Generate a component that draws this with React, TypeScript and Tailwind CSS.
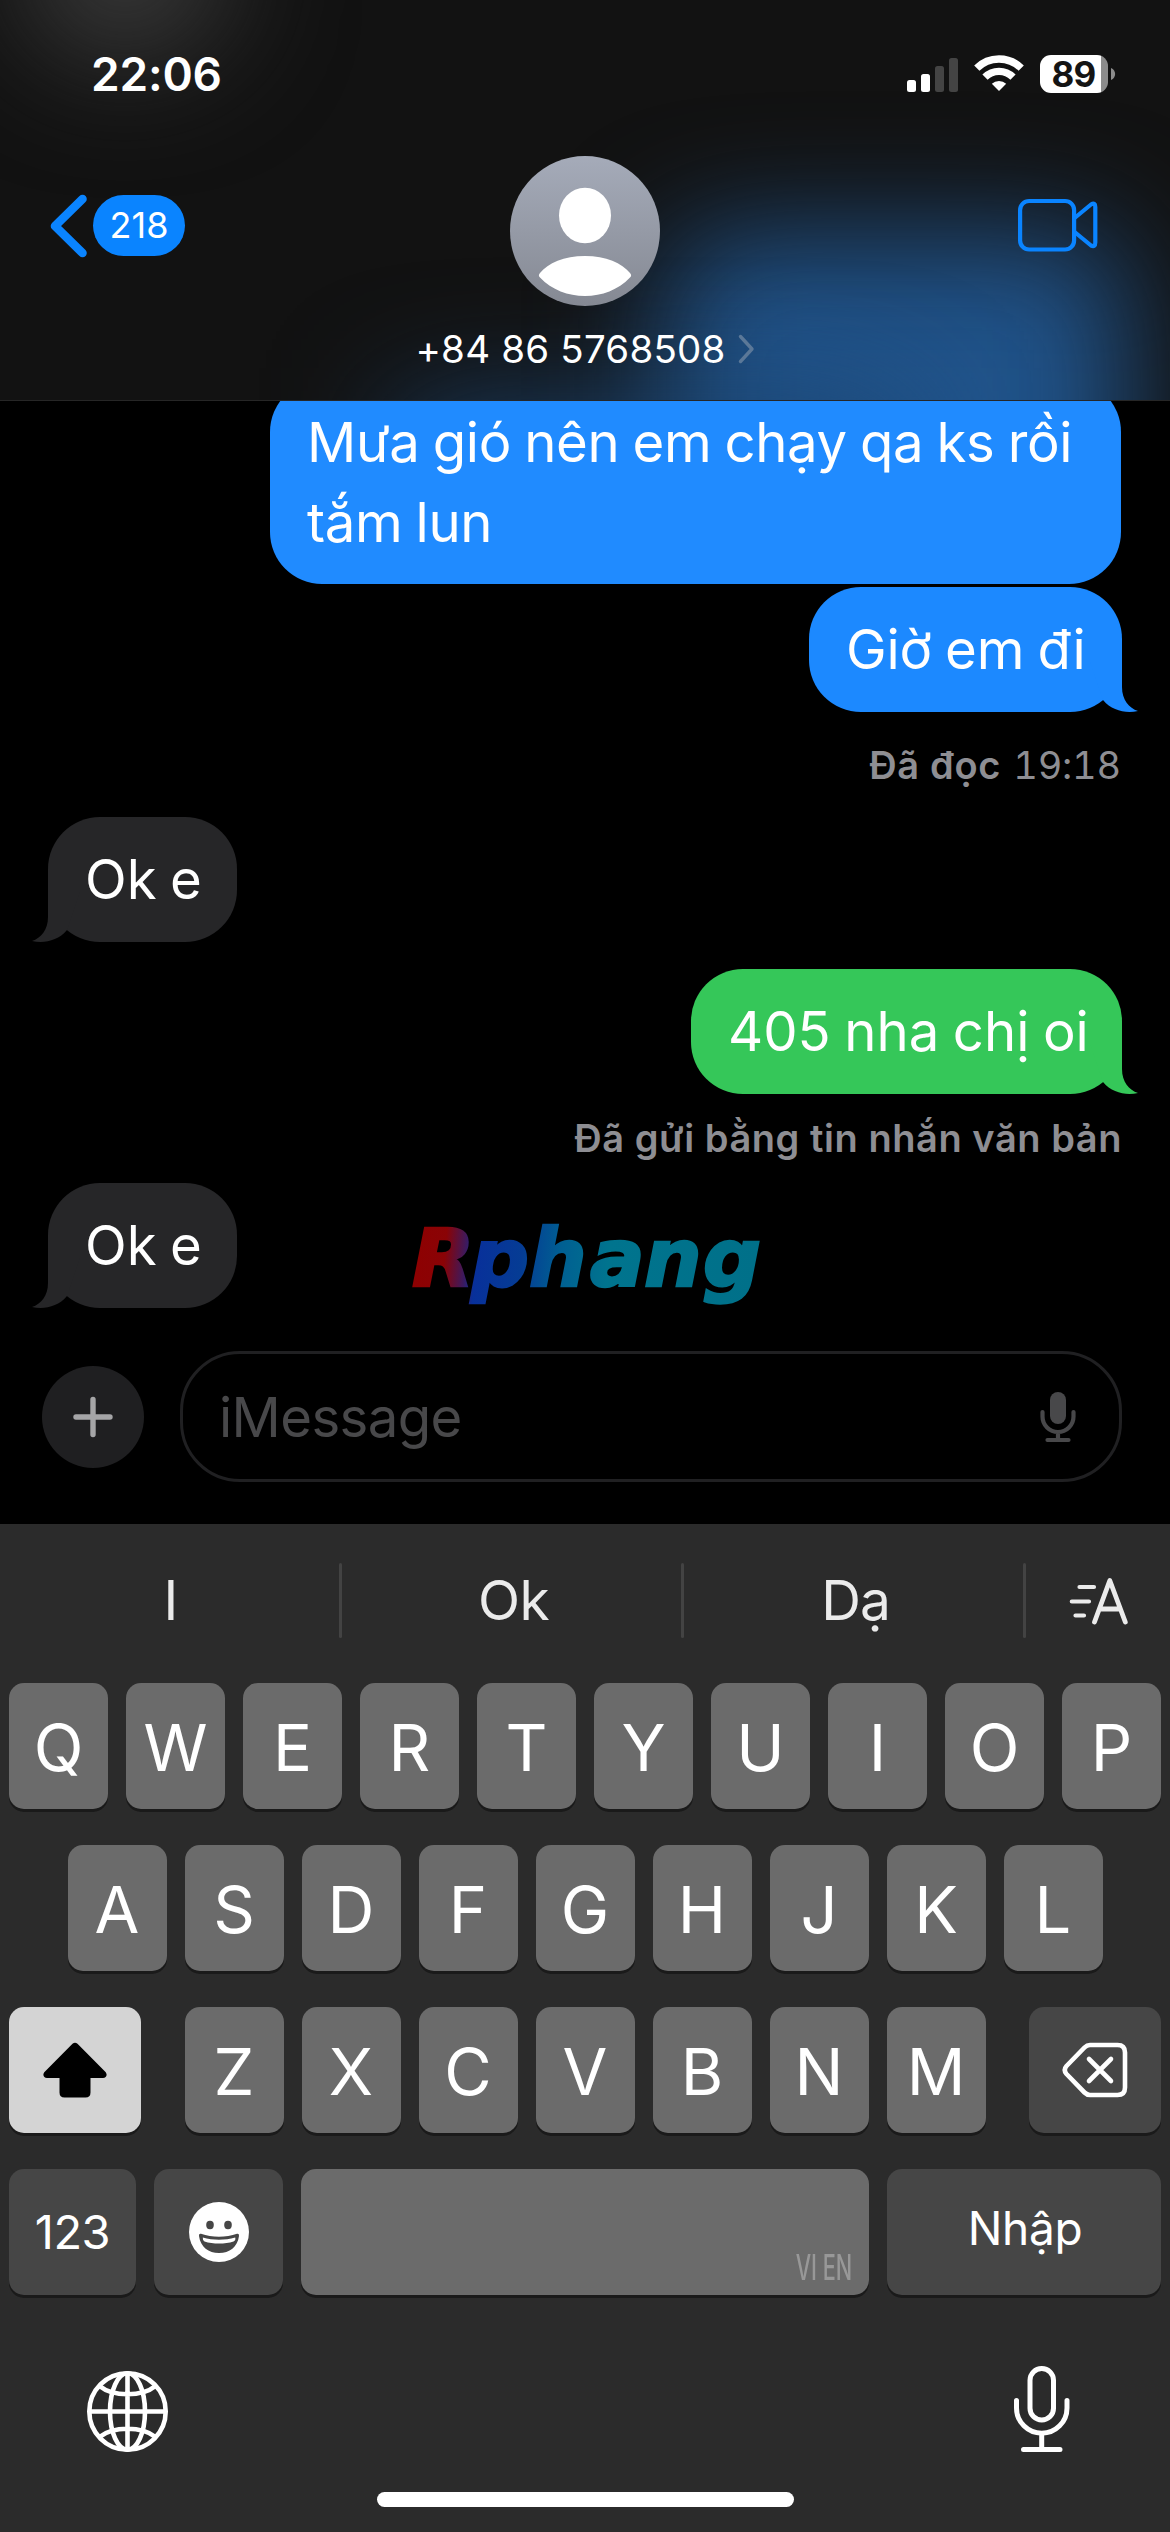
import type { ReactNode } from "react";

function StatusBar() {
  return (
    <div className="relative flex h-[148px] items-center justify-between pr-[54px] pl-[91px]">
      <div className="text-[46px] leading-[50px] font-semibold tracking-[-0.2px]">22:06</div>
      <div className="flex items-center">
        <svg width="52" height="36" viewBox="0 0 52 36" className="mt-0.5">
          <rect x="0" y="23" width="9" height="12" rx="2.5" fill="#fff" />
          <rect x="14" y="17" width="9" height="18" rx="2.5" fill="#fff" />
          <rect x="28" y="9" width="9" height="26" rx="2.5" fill="#444" />
          <rect x="42" y="1" width="9" height="34" rx="2.5" fill="#444" />
        </svg>
        <svg width="50" height="36" viewBox="0 0 50 36" className="ml-[15px] -mt-0.5">
          <g fill="none" stroke="#fff" strokeWidth="7.4">
            <path d="M2.8 13.2 A31.4 31.4 0 0 1 47.2 13.2" />
            <path d="M11 22.2 A19.8 19.8 0 0 1 39 22.2" />
          </g>
          <path d="M25 36 L17.8 28.8 A10.4 10.4 0 0 1 32.2 28.8 Z" fill="#fff" />
        </svg>
        <div className="ml-4 flex h-[38px] w-[68px] items-center justify-center rounded-[11px] bg-[linear-gradient(90deg,#fff_61px,#8c8c8c_61px)] pr-px text-[35px] leading-[38px] font-bold tracking-[-0.8px] text-[#141414]">
          89
        </div>
        <svg width="5" height="14" viewBox="0 0 5 14" className="ml-[3px]">
          <path d="M0 1 C5.5 3 5.5 11 0 13 Z" fill="#8c8c8c" />
        </svg>
      </div>
    </div>
  );
}

function Header() {
  return (
    <header className="relative h-[401px] overflow-hidden border-b border-[#262626] bg-[#121212]">
      <div className="absolute top-[235px] left-[665px] h-[420px] w-[460px] rounded-[60px] bg-[#20538a] blur-[60px]" />
      <div className="absolute top-[410px] left-[400px] h-[120px] w-[500px] bg-[#1b4470] blur-[64px]" />
      <div className="absolute -top-[120px] left-[20px] h-[180px] w-[210px] rounded-full bg-[#3a3a3a] blur-[60px]" />
      <StatusBar />
      <div className="relative grid grid-cols-3">
        <div className="flex h-[155px] items-center pl-[49px]">
          <svg width="39" height="64" viewBox="0 0 39 64">
            <path
              d="M33.5 5 L6 32 L33.5 59"
              fill="none"
              stroke="#0a84ff"
              strokeWidth="8.6"
              strokeLinecap="round"
              strokeLinejoin="round"
            />
          </svg>
          <div className="ml-[5px] h-[61px] w-[92px] rounded-full bg-[#0a84ff] text-center text-[36px] leading-[61px]">
            218
          </div>
        </div>
        <div className="flex flex-col items-center pt-2">
          <svg width="150" height="150" viewBox="0 0 150 150">
            <defs>
              <linearGradient id="avatar" x1="0" y1="0" x2="0" y2="1">
                <stop offset="0" stopColor="#a5abb9" />
                <stop offset="1" stopColor="#858993" />
              </linearGradient>
            </defs>
            <circle cx="75" cy="75" r="75" fill="url(#avatar)" />
            <ellipse cx="75" cy="59.5" rx="26" ry="27.8" fill="#fff" />
            <path
              d="M75 100 C96 100 112 107 120 117 C121.500 119 121.500 120 120 121.500 C108 134 92 140 75 140 C58 140 42 134 30 121.500 C28.500 120 28.500 119 30 117 C38 107 54 100 75 100Z"
              fill="#fff"
            />
          </svg>
          <div className="mt-[19px] flex items-center whitespace-nowrap">
            <span className="text-[38.500px] leading-[48px] tracking-[0.2px]">+84 86 5768508</span>
            <svg width="17" height="30" viewBox="0 0 17 30" className="ml-3">
              <path
                d="M2.500 2.500 L14 15 L2.500 27.500"
                fill="none"
                stroke="#5b7898"
                strokeWidth="3.400"
                strokeLinecap="round"
                strokeLinejoin="round"
              />
            </svg>
          </div>
        </div>
        <div className="flex h-[153px] items-center justify-end pr-[72px]">
          <svg width="80" height="56" viewBox="0 0 80 56" fill="none" stroke="#0a84ff" strokeWidth="4.200">
            <rect x="2.100" y="4" width="54" height="48.500" rx="9" />
            <path
              d="M56 21.500 L73 7.500 Q77.300 5 77.300 10 V45.500 Q77.300 50.500 73 48.500 L56 34.500"
              strokeLinejoin="round"
            />
          </svg>
        </div>
      </div>
    </header>
  );
}

function Tail({ side, color }: { side: "left" | "right"; color: string }) {
  return (
    <svg
      width="48"
      height="60"
      viewBox="0 0 48 60"
      className={
        side === "right"
          ? "absolute -right-4 bottom-0"
          : "absolute bottom-0 -left-4 -scale-x-100"
      }
    >
      <path d="M0 0 H32 V35 C32 48 39 56 48 59 C36 61.500 22 59 13 48 L0 10Z" fill={color} />
    </svg>
  );
}

function Bubble({
  className,
  tail,
  color,
  children,
}: {
  className: string;
  tail?: "left" | "right";
  color: string;
  children: ReactNode;
}) {
  return (
    <div
      className={`relative shrink-0 rounded-[52px] pt-[23px] pb-[22px] pl-[37px] text-[54.500px] leading-[79.500px] whitespace-nowrap [word-spacing:-1.800px] ${className}`}
    >
      {tail && <Tail side={tail} color={color} />}
      <span className="relative">{children}</span>
    </div>
  );
}

function Logo() {
  return (
    <svg width="370" height="120" viewBox="0 0 370 120" className="absolute top-[799px] left-[405px]">
      <defs>
        <linearGradient id="brand" gradientUnits="userSpaceOnUse" x1="6" y1="0" x2="354" y2="30">
          <stop offset="0" stopColor="#8f0000" />
          <stop offset="0.110" stopColor="#8a0306" />
          <stop offset="0.170" stopColor="#3b1a60" />
          <stop offset="0.200" stopColor="#08309a" />
          <stop offset="0.330" stopColor="#053c94" />
          <stop offset="0.440" stopColor="#005f92" />
          <stop offset="0.580" stopColor="#00748e" />
          <stop offset="1" stopColor="#007089" />
        </linearGradient>
      </defs>
      <text
        x="7 66 124 185 239 298"
        y="86"
        fill="url(#brand)"
        stroke="url(#brand)"
        strokeWidth="2.500"
        strokeLinejoin="miter"
        className="font-['DejaVu_Sans',sans-serif] text-[81px] font-bold italic"
      >
        Rphang
      </text>
    </svg>
  );
}

function Conversation() {
  return (
    <main className="relative flex h-[1123px] flex-col overflow-hidden bg-black">
      <Bubble color="#208bff" className="-mt-[21px] mr-[49px] w-[851px] self-end bg-[#208bff] tracking-[-0.350px]">
        Mưa gió nên em chạy qa ks rồi
        <br />
        tắm lun
      </Bubble>
      <Bubble
        color="#1c89ff"
        tail="right"
        className="mt-[3px] mr-12 h-[125px] w-[313px] self-end bg-[#1c89ff] tracking-[-0.200px]"
      >
        Giờ em đi
      </Bubble>
      <div className="mt-[31px] mr-[49px] flex h-11 gap-[12px] self-end text-[38px] leading-[44px] text-[#8e8e93]">
        <span className="font-semibold tracking-[0.700px]">Đã đọc</span>
        <span className="tracking-[-0.200px] tabular-nums">19:18</span>
      </div>
      <Bubble color="#262628" tail="left" className="mt-[30px] ml-12 h-[125px] w-[189px] bg-[#262628]">
        Ok e
      </Bubble>
      <Bubble color="#35c759" tail="right" className="mt-[27px] mr-12 h-[125px] w-[431px] self-end bg-[#35c759]">
        405 nha chị oi
      </Bubble>
      <div className="mt-[22px] mr-[48px] mb-px h-11 self-end text-[38px] leading-[44px] font-semibold tracking-[0.550px] text-[#8e8e93]">
        Đã gửi bằng tin nhắn văn bản
      </div>
      <Bubble color="#262628" tail="left" className="mt-[22px] ml-12 h-[125px] w-[189px] bg-[#262628]">
        Ok e
      </Bubble>
      <Logo />
      <div className="mt-[43px] flex shrink-0 items-center pr-12 pl-[42px]">
        <div className="flex size-[102px] items-center justify-center rounded-full bg-[#1f1f21]">
          <svg width="40" height="42" viewBox="0 0 40 42" stroke="#a5a5a7" strokeWidth="5.400" strokeLinecap="round">
            <path d="M20 3.500 V38.500 M3 21 H37" />
          </svg>
        </div>
        <div className="ml-9 flex h-[131px] flex-1 items-center justify-between rounded-[60px] border-[3px] border-[#202022] pr-[43px] pl-9 text-[54.500px] text-[#48484a]">
          <span className="mt-0.5 tracking-[-0.600px]">iMessage</span>
          <svg width="36" height="52" viewBox="0 0 36 52" fill="none" stroke="#48484a" strokeWidth="4.200" strokeLinecap="round">
            <rect x="10" y="1" width="16" height="32" rx="8" fill="#48484a" stroke="none" />
            <path d="M2.500 21 V25.500 A15.500 15.500 0 0 0 33.500 25.500 V21 M18 41 V49 M7.500 49 H28.500" />
          </svg>
        </div>
      </div>
    </main>
  );
}

function Key({ children, className = "w-[99px] bg-[#6b6b6b]" }: { children?: ReactNode; className?: string }) {
  return (
    <div
      className={`relative flex h-[126px] shrink-0 items-center justify-center rounded-[15px] shadow-[0_3px_0_#1a1a1a] ${className}`}
    >
      {children}
    </div>
  );
}

function Letters({ row }: { row: string }) {
  return (
    <div className="flex gap-[18px]">
      {row.split("").map((c) => (
        <Key key={c}>
          <span className="pt-[3px] text-[65px] leading-[123px]">{c}</span>
        </Key>
      ))}
    </div>
  );
}

function Suggestions() {
  return (
    <div className="mb-[6px] flex h-[153px] items-center text-[55px] text-[#ebebeb]">
      <div className="w-[339px] pl-[3px] text-center">I</div>
      <div className="h-[75px] w-[3px] rounded-full bg-[#434343]" />
      <div className="w-[339px] pl-1 text-center tracking-[-0.500px]">Ok</div>
      <div className="h-[75px] w-[3px] rounded-full bg-[#434343]" />
      <div className="w-[339px] pl-1 text-center tracking-[-1px]">Dạ</div>
      <div className="h-[75px] w-[3px] rounded-full bg-[#434343]" />
      <svg
        width="60"
        height="50"
        viewBox="0 0 60 50"
        className="ml-[43px]"
        fill="none"
        stroke="#ebebeb"
        strokeWidth="4.800"
        strokeLinecap="round"
        strokeLinejoin="round"
      >
        <path d="M10.500 11 H25 M2.800 25.500 H20 M6.500 39.500 H15" strokeWidth="4.200" />
        <path d="M25.500 46 L40.800 4.500 L56.300 46 M31 33 H51" />
      </svg>
    </div>
  );
}

function Keyboard() {
  return (
    <section className="flex h-[1008px] flex-col bg-[#2b2b2b]">
      <Suggestions />
      <div className="flex flex-col gap-9 px-[9px]">
        <Letters row="QWERTYUIOP" />
        <div className="flex justify-center">
          <Letters row="ASDFGHJKL" />
        </div>
        <div className="flex justify-between">
          <Key className="w-[132px] bg-[#d4d4d4]">
            <svg width="64" height="56" viewBox="0 0 64 56" className="-mt-px">
              <path
                d="M29.500 1.800 Q32 -0.500 34.500 1.800 L62 29.500 C65 32.500 63.500 36 60 36 H47.500 V50.500 Q47.500 55.500 42.500 55.500 H21.500 Q16.500 55.500 16.500 50.500 V36 H4 C0.500 36 -1 32.500 2 29.500 Z"
                fill="#000"
              />
            </svg>
          </Key>
          <Letters row="ZXCVBNM" />
          <Key className="w-[132px] bg-[#464646]">
            <svg
              width="66"
              height="56"
              viewBox="0 0 66 56"
              fill="none"
              stroke="#fff"
              strokeWidth="4.600"
              strokeLinecap="round"
              strokeLinejoin="round"
            >
              <path d="M28 3 H55.500 Q63 3 63 10.500 V45.500 Q63 53 55.500 53 H28 Q25 53 22.500 50.500 L4.500 32 Q1 28 4.500 24 L22.500 5.500 Q25 3 28 3Z" />
              <path d="M27 17 L49 39 M49 17 L27 39" />
            </svg>
          </Key>
        </div>
        <div className="flex gap-[18px]">
          <Key className="w-[127px] bg-[#464646]">
            <span className="text-[47px] tracking-[-0.500px]">123</span>
          </Key>
          <Key className="w-[129px] bg-[#464646]">
            <svg width="60" height="60" viewBox="0 0 60 60">
              <circle cx="30" cy="30" r="30" fill="#fff" />
              <ellipse cx="21" cy="23" rx="3.800" ry="4.200" fill="#464646" />
              <ellipse cx="39" cy="23" rx="3.800" ry="4.200" fill="#464646" />
              <path
                d="M12 31.800 C23 35.800 37 35.800 48 31.800 Q50.300 31.300 50 34 C48.500 45 40.500 51 30 51 C19.500 51 11.500 45 10 34 Q9.700 31.300 12 31.800Z"
                fill="#464646"
              />
              <path d="M13.800 35.600 C24 38.600 36 38.600 46.200 35.600 Q47 38.500 44.500 39.500 C36 42.200 24 42.200 15.500 39.500 Q13.500 38.500 13.800 35.600Z" fill="#fff" />
            </svg>
          </Key>
          <Key className="w-[568px] bg-[#6b6b6b]">
            <span className="absolute right-[17px] bottom-[8px] origin-right scale-x-[0.620] text-[35px] leading-[40px] font-medium whitespace-nowrap text-[#989898]">
              VI EN
            </span>
          </Key>
          <Key className="w-[274px] bg-[#464646]">
            <span className="-mt-[8px] pl-[2px] text-[46px] tracking-[-0.300px]">Nhập</span>
          </Key>
        </div>
      </div>
      <div className="mt-[70px] flex items-start justify-between pr-[99px] pl-[86px]">
        <svg width="83" height="83" viewBox="0 0 83 83" className="mt-[5px]" fill="none" stroke="#fff" strokeWidth="4.600">
          <circle cx="41.500" cy="41.500" r="38.200" />
          <ellipse cx="41.500" cy="41.500" rx="17.500" ry="38.200" />
          <path d="M41.500 3 V80 M3 41.500 H80 M13.500 16 C27 27 56 27 69.500 16 M13.500 67 C27 56 56 56 69.500 67" />
        </svg>
        <svg width="58" height="88" viewBox="0 0 58 88" fill="none" stroke="#fff" strokeWidth="5" strokeLinecap="round">
          <rect x="17" y="3.500" width="23.500" height="51.500" rx="11.700" />
          <path d="M3.500 35.500 V43 A25.200 25.200 0 0 0 54 43 V35.500 M28.700 68.500 V84 M10.500 84.500 H47" />
        </svg>
      </div>
      <div className="mt-[39px] h-[15px] w-[417px] self-center rounded-full bg-white" />
    </section>
  );
}

export default function App() {
  return (
    <div className="h-[2532px] w-[1170px] overflow-hidden bg-black font-['Inter',sans-serif] text-white">
      <Header />
      <Conversation />
      <Keyboard />
    </div>
  );
}
